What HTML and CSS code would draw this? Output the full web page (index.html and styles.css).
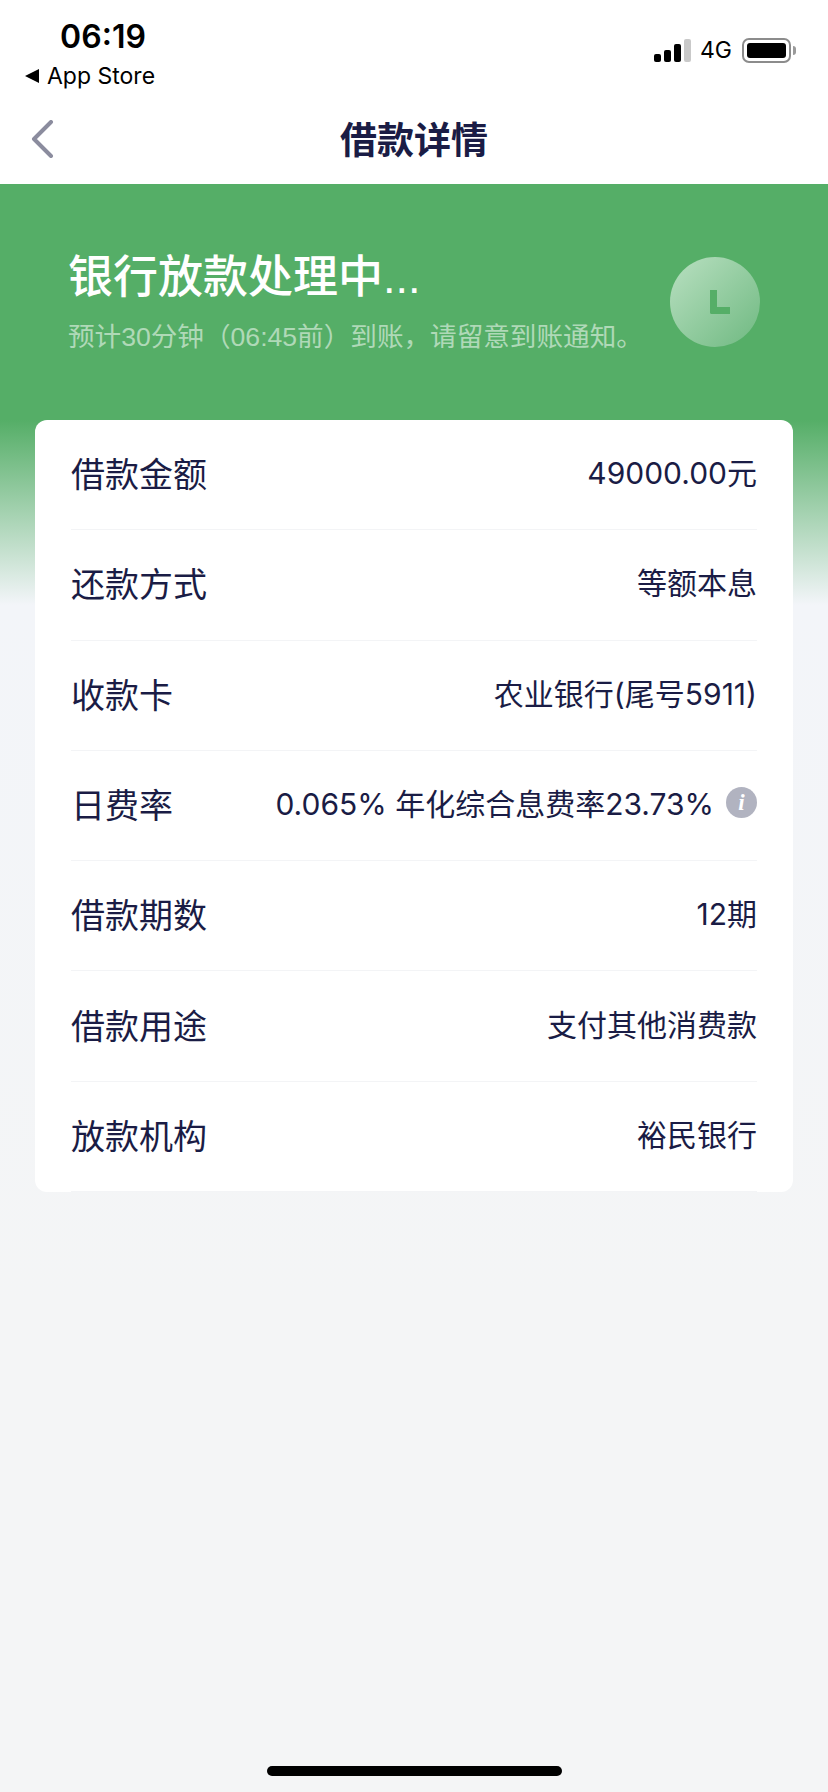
FILE: index.html
```html
<!DOCTYPE html>
<html lang="zh-CN">
<head>
  <meta charset="UTF-8" />
  <meta name="viewport" content="width=device-width, initial-scale=1.0" />
  <title>借款详情</title>
  <link rel="stylesheet" href="styles.css">
</head>
<body>
  <div id="container">
    <!-- Status bar -->
    <div class="status-bar">
      <div class="status-left">
        <div class="time">06:19</div>
        <div class="back-app"><span class="back-arrow"></span>App Store</div>
      </div>
      <div class="status-right">
        <div class="signal">
          <span class="bar bar1"></span>
          <span class="bar bar2"></span>
          <span class="bar bar3"></span>
          <span class="bar bar4"></span>
        </div>
        <span class="network">4G</span>
        <div class="battery"><span class="battery-level"></span></div>
        <span class="battery-cap"></span>
      </div>
    </div>

    <!-- Nav bar -->
    <div class="nav-bar">
      <svg class="nav-back" width="24" height="38" viewBox="0 0 24 38">
        <path d="M21 2 L4 19 L21 36" fill="none" stroke="#8b8c9e" stroke-width="4" stroke-linecap="round" stroke-linejoin="round"/>
      </svg>
      <div class="nav-title">借款详情</div>
    </div>

    <div class="hero">
      <div class="hero-text">
        <div class="hero-title">银行放款处理中...</div>
        <div class="hero-sub">预计30分钟（06:45前）到账，请留意到账通知。</div>
      </div>
      <div class="clock"><span class="clock-hands"></span></div>
    </div>

    <!-- Detail card -->
    <div class="card">
      <div class="row"><span class="label">借款金额</span><span class="value">49000.00元</span></div>
      <div class="row"><span class="label">还款方式</span><span class="value">等额本息</span></div>
      <div class="row"><span class="label">收款卡</span><span class="value">农业银行(尾号5911)</span></div>
      <div class="row">
        <span class="label">日费率</span>
        <span class="value value-info">0.065% 年化综合息费率23.73%<span class="info">i</span></span>
      </div>
      <div class="row"><span class="label">借款期数</span><span class="value">12期</span></div>
      <div class="row"><span class="label">借款用途</span><span class="value">支付其他消费款</span></div>
      <div class="row"><span class="label">放款机构</span><span class="value">裕民银行</span></div>
    </div>

    <div class="home-indicator"></div>
  </div>
</body>
</html>
```

FILE: styles.css
```css
body {
  margin: 0;
  overflow: hidden;
  font-family: "Liberation Sans", "Noto Sans CJK SC", sans-serif;
  background: #f4f5f6;
}

#container {
  position: relative;
  width: 828px;
  height: 1792px;
  background: linear-gradient(#55ae67 0, #55ae67 420px, #f3f5f9 605px, #f4f5f6 1300px);
}

.status-bar {
  display: flex;
  justify-content: space-between;
  height: 96px;
  background: #fff;
  color: #000;
}

.status-left {
  padding: 15px 0 0 26px;
}

.time {
  width: 154px;
  text-align: center;
  font-size: 32px;
  line-height: 44px;
  font-weight: 600;
  font-family: "Inter", "Liberation Sans", sans-serif;
}

.back-app {
  display: flex;
  align-items: center;
  margin-top: 1px;
  margin-left: -1px;
  font-size: 23px;
  line-height: 32px;
  font-family: "Inter", "Liberation Sans", sans-serif;
}

.back-arrow {
  width: 0;
  height: 0;
  margin-right: 8px;
  border-top: 7px solid transparent;
  border-bottom: 7px solid transparent;
  border-right: 14px solid #000;
}

.status-right {
  display: flex;
  align-items: center;
  height: 100px;
  padding-right: 32px;
}

.signal {
  display: flex;
  align-items: flex-end;
  gap: 3px;
  height: 23px;
  margin-right: 9px;
}

.bar {
  width: 7px;
  border-radius: 2px;
  background: #000;
}

.bar1 { height: 8px; }
.bar2 { height: 12px; }
.bar3 { height: 18px; }
.bar4 { height: 23px; background: #c9c9c9; }

.network {
  font-size: 23px;
  font-family: "Inter", "Liberation Sans", sans-serif;
  margin-right: 10px;
}

.battery {
  box-sizing: border-box;
  width: 49px;
  height: 25px;
  padding: 3px;
  border: 2px solid #8c8c8c;
  border-radius: 7px;
}

.battery-level {
  display: block;
  height: 100%;
  background: #000;
  border-radius: 3px;
}

.battery-cap {
  width: 3px;
  height: 9px;
  margin-left: 2px;
  background: #9a9a9a;
  border-radius: 0 3px 3px 0;
}

.nav-bar {
  position: relative;
  display: flex;
  justify-content: center;
  align-items: center;
  box-sizing: border-box;
  height: 88px;
  padding-bottom: 4px;
  background: #fff;
}

.nav-back {
  position: absolute;
  left: 30px;
  top: 24px;
}

.nav-title {
  font-size: 37px;
  font-weight: bold;
  color: #1a1c45;
}

.hero {
  display: flex;
  justify-content: space-between;
  height: 236px;
  padding: 0 68px 0 68px;
}

.hero-title {
  margin-top: 64px;
  font-size: 45px;
  line-height: 60px;
  font-weight: 500;
  color: #fff;
}

.hero-sub {
  margin-top: 11px;
  font-size: 26.6px;
  line-height: 36px;
  color: rgba(255, 255, 255, 0.55);
}

.clock {
  display: flex;
  justify-content: center;
  align-items: center;
  width: 90px;
  height: 90px;
  margin: 73px 0 0 0;
  border-radius: 50%;
  background: linear-gradient(135deg, #b9e0c1, #6fb981);
}

.clock-hands {
  width: 13px;
  height: 17px;
  margin-left: 10px;
  border-left: 7px solid #55ae67;
  border-bottom: 7px solid #55ae67;
  border-bottom-left-radius: 2px;
}

.card {
  margin: 0 35px;
  padding: 0 36px;
  height: 772px;
  background: #fff;
  border-radius: 12px;
}

.row {
  display: flex;
  justify-content: space-between;
  align-items: center;
  height: 110.3px;
  box-sizing: border-box;
  padding-bottom: 4px;
  border-bottom: 1px solid #f3f4f6;
}

.label {
  font-size: 34px;
  color: #1a1c45;
}

.value {
  margin-bottom: 3px;
  font-size: 30px;
  color: #1a1c45;
  font-family: "Inter", "Liberation Sans", "Noto Sans CJK SC", sans-serif;
}

.value-info {
  display: flex;
  align-items: center;
}

.info {
  width: 31px;
  height: 31px;
  margin-left: 12px;
  border-radius: 50%;
  background: #b1b3c0;
  color: #fff;
  font-family: "Liberation Serif", serif;
  font-style: italic;
  font-weight: bold;
  font-size: 23px;
  line-height: 31px;
  text-align: center;
}

.home-indicator {
  position: absolute;
  left: 267px;
  bottom: 16px;
  width: 295px;
  height: 10px;
  border-radius: 5px;
  background: #000;
}
```
